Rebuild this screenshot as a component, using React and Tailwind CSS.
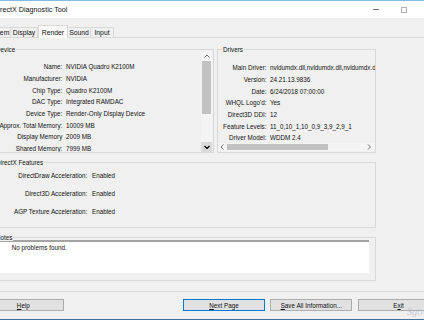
import React from "react";

const device = [
  ["Name:", "NVIDIA Quadro K2100M"],
  ["Manufacturer:", "NVIDIA"],
  ["Chip Type:", "Quadro K2100M"],
  ["DAC Type:", "Integrated RAMDAC"],
  ["Device Type:", "Render-Only Display Device"],
  ["Approx. Total Memory:", "10009 MB"],
  ["Display Memory", "2009 MB"],
  ["Shared Memory:", "7999 MB"],
];

const drivers = [
  ["Main Driver:", "nvldumdx.dll,nvldumdx.dll,nvldumdx.dll,nvldumdx.dll"],
  ["Version:", "24.21.13.9836"],
  ["Date:", "6/24/2018 07:00:00"],
  ["WHQL Logo'd:", "Yes"],
  ["Direct3D DDI:", "12"],
  ["Feature Levels:", "11_0,10_1,10_0,9_3,9_2,9_1"],
  ["Driver Model:", "WDDM 2.4"],
];

const features = [
  ["DirectDraw Acceleration:", "Enabled"],
  ["Direct3D Acceleration:", "Enabled"],
  ["AGP Texture Acceleration:", "Enabled"],
];

const Chevron = ({ dir = "up", dark = false }) => {
  const d = {
    up: "M0.5 3.5 L3 1 L5.5 3.5",
    down: "M0.5 1 L3 3.5 L5.5 1",
    left: "M3.5 0.5 L1 3 L3.5 5.5",
    right: "M1 0.5 L3.5 3 L1 5.5",
  }[dir];
  const vert = dir === "up" || dir === "down";
  return (
    <svg
      width={vert ? 6 : 4.5}
      height={vert ? 4.5 : 6}
      viewBox={vert ? "0 0 6 4.5" : "0 0 4.5 6"}
    >
      <path d={d} fill="none" stroke={dark ? "#000" : "#606060"} strokeWidth={dark ? 1.3 : 0.9} />
    </svg>
  );
};

const GroupBox = ({ label, className = "", children }) => (
  <div className={`relative shrink-0 border border-[#d9d9d9] ${className}`}>
    <span className="absolute left-[4px] top-[-4.5px] bg-[#f0f0f0] px-[1px] text-[6.3px] leading-[7px] whitespace-nowrap text-[#111]">
      {label}
    </span>
    {children}
  </div>
);

const Btn = ({ className = "", children }) => (
  <div
    className={`shrink-0 w-[82px] h-[12px] border bg-[#e1e1e1] flex items-center justify-center text-[6.3px] leading-[7px] text-[#111] ${className}`}
  >
    {children}
  </div>
);

const Tab = ({ label, w, active, first }) =>
  active ? (
    <div
      className={`${w} h-[13px] -mb-px relative z-10 bg-[#fbfbfb] border-x border-t border-[#d9d9d9] flex justify-center pt-[2.5px] text-[6.8px] leading-[7px] text-[#111]`}
    >
      {label}
    </div>
  ) : (
    <div
      className={`${w} h-[10px] border-t border-r ${first ? "border-l" : ""} border-[#d9d9d9] bg-[#f0f0f0] flex items-center justify-center text-[6.8px] leading-[7px] text-[#111]`}
    >
      {label}
    </div>
  );

export default function App() {
  return (
    <div className="relative w-[424px] h-[320px] overflow-hidden bg-[#f0f0f0] flex flex-col font-['Liberation_Sans',Arial,sans-serif] text-[#111]">
      <div className="h-px bg-[#84bce9] shrink-0" />
      {/* title bar */}
      <div className="h-[17px] shrink-0 bg-white flex items-center">
        <span className="ml-[-6.8px] text-[7.2px] leading-[8px] whitespace-nowrap text-[#111]">
          DirectX Diagnostic Tool
        </span>
        <div className="ml-auto flex h-full pr-[6px]">
          <div className="w-[28px] h-full flex items-center justify-center">
            <div className="w-[6.5px] h-px bg-[#7a7a7a]" />
          </div>
          <div className="w-[28px] h-full flex items-center justify-center">
            <div className="w-[6px] h-[6px] border border-[#b0b0b0]" />
          </div>
        </div>
      </div>

      {/* tabs */}
      <div className="h-[19px] shrink-0 flex items-end ml-[-15px]">
        <Tab label="System" w="w-[26px]" first />
        <Tab label="Display" w="w-[27px]" />
        <Tab label="Render" w="w-[30px]" active />
        <Tab label="Sound" w="w-[23px]" />
        <Tab label="Input" w="w-[23px]" />
      </div>

      {/* tab page */}
      <div className="shrink-0 border-t border-b border-[#d9d9d9] flex flex-col pb-[10px] text-[6.3px] leading-[7px]">
        <div className="flex mt-[11px]">
          <GroupBox label="Device" className="ml-[-10px] w-[224px] h-[104px] flex">
            <div className="flex-1 pt-[10.9px] overflow-hidden">
              {device.map(([k, v]) => (
                <div key={k} className="flex items-center h-[11.66px] whitespace-nowrap">
                  <span className="w-[71.3px] shrink-0 text-right">{k}</span>
                  <span className="ml-[3.7px]">{v}</span>
                </div>
              ))}
            </div>
            <div className="w-[11px] mt-[1px] mr-[1px] flex flex-col bg-[#f4f4f4]">
              <div className="h-[10px] flex items-center justify-center">
                <Chevron dir="up" />
              </div>
              <div className="h-[53px] mx-[1px] bg-[#c2c2c2]" />
              <div className="flex-1" />
              <div className="h-[10px] bg-[#dadada] flex items-center justify-center">
                <Chevron dir="down" dark />
              </div>
            </div>
          </GroupBox>

          <GroupBox label="Drivers" className="ml-[3px] w-[159px] h-[104px] flex flex-col">
            <div className="flex-1 pt-[11.9px] overflow-hidden">
              {drivers.map(([k, v]) => (
                <div key={k} className="flex items-center h-[11.66px] whitespace-nowrap">
                  <span className="w-[48.5px] shrink-0 text-right">{k}</span>
                  <span className="ml-[3.5px]">{v}</span>
                </div>
              ))}
            </div>
            <div className="h-[8.5px] mb-[1px] mr-[1px] flex bg-[#f4f4f4]">
              <div className="w-[9px] flex items-center justify-center">
                <Chevron dir="left" />
              </div>
              <div className="w-[101px] my-[1px] bg-[#c2c2c2]" />
              <div className="flex-1" />
              <div className="w-[9px] flex items-center justify-center">
                <Chevron dir="right" />
              </div>
            </div>
          </GroupBox>
        </div>

        <GroupBox label="DirectX Features" className="mt-[9px] ml-[-10px] w-[386px] h-[66px] pt-[4px]">
          {features.map(([k, v]) => (
            <div key={k} className="flex items-center h-[17.8px] whitespace-nowrap">
              <span className="w-[96.3px] shrink-0 text-right">{k}</span>
              <span className="ml-[4.7px]">{v}</span>
            </div>
          ))}
        </GroupBox>

        <GroupBox label="Notes" className="mt-[9px] ml-[-10px] w-[386px] h-[44px] flex items-start">
          <div className="flex-1 mt-[2px] ml-[6px] mr-[6px] h-[33px] bg-white border-t-2 border-[#a3a3a3] pl-[14.7px] pt-[1.8px]">
            No problems found.
          </div>
        </GroupBox>
      </div>

      {/* buttons */}
      <div className="flex mt-[7.3px] ml-[-17.7px] shrink-0">
        <Btn className="border-[#adadad]">
          <span>
            <u>H</u>elp
          </span>
        </Btn>
        <Btn className="ml-[118.7px] border-[#0078d7]">
          <span>
            <u>N</u>ext Page
          </span>
        </Btn>
        <Btn className="ml-[5.3px] border-[#adadad]">
          <span>
            <u>S</u>ave All Information...
          </span>
        </Btn>
        <Btn className="ml-[5.3px] border-[#adadad]">
          <span>
            E<u>x</u>it
          </span>
        </Btn>
      </div>

      <div className="mt-auto h-px shrink-0 bg-[#42719c]" />

      <span className="absolute left-[407px] top-[306px] italic text-[10px] leading-[12px] text-[#aab2ba] opacity-60 font-['Liberation_Serif',serif]">
        Sgtvn
      </span>
    </div>
  );
}
